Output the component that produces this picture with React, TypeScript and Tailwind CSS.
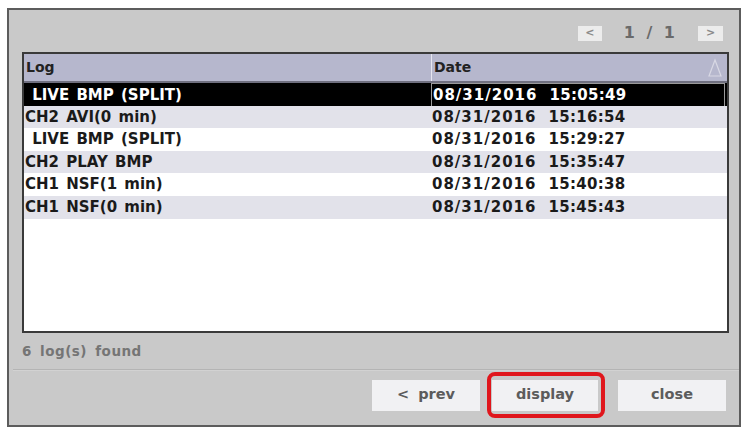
import React from 'react';

const rows = [
  { log: ' LIVE BMP (SPLIT)', date: '08/31/2016 15:05:49' },
  { log: 'CH2 AVI(0 min)', date: '08/31/2016 15:16:54' },
  { log: ' LIVE BMP (SPLIT)', date: '08/31/2016 15:29:27' },
  { log: 'CH2 PLAY BMP', date: '08/31/2016 15:35:47' },
  { log: 'CH1 NSF(1 min)', date: '08/31/2016 15:40:38' },
  { log: 'CH1 NSF(0 min)', date: '08/31/2016 15:45:43' },
];

export default function App() {
  return (
    <div className="w-[746px] h-[428px] bg-white pt-[8px] pl-[7px] font-['DejaVu_Sans',sans-serif] font-bold">
      <div className="w-[734px] h-[419px] bg-[#c9c9c9] border-2 border-[#5c5c5c] flex flex-col">
        {/* pager */}
        <div className="h-[42px] flex items-center justify-end pr-[16px] pt-[4px]">
          <div className="w-[24px] h-[15px] bg-[#ececec] flex items-center justify-center text-[11px] text-[#8a8a8a]">&lt;</div>
          <span className="ml-[22px] mr-[20px] text-[16px] text-[#6a6a6a] tracking-[3px]">1 / 1</span>
          <div className="w-[25px] h-[15px] bg-[#ececec] flex items-center justify-center text-[11px] text-[#8a8a8a]">&gt;</div>
        </div>

        {/* table */}
        <div className="ml-[13px] mr-[10px] h-[281px] bg-white border-2 border-[#3a3a3a] flex flex-col">
          <div className="h-[29px] grid grid-cols-[407px_1fr] bg-[#b6b7cd] border-b-2 border-[#707080] text-[14px] text-[#222]">
            <div className="pl-[2px] flex items-center">Log</div>
            <div className="relative pl-[2px] flex items-center border-l border-[#e6e6f0]">
              Date
              <svg className="absolute right-[4px] top-[4px]" width="16" height="20" viewBox="0 0 16 20">
                <path d="M8 2 L14 18 L2 18 Z" fill="none" stroke="#d8d8e4" strokeWidth="1.2" />
              </svg>
            </div>
          </div>
          {rows.map((r, i) => {
            const sel = i === 0;
            const bg = sel ? 'bg-black text-white' : i % 2 === 1 ? 'bg-[#e2e2ea] text-[#1a1a1a]' : 'bg-white text-[#1a1a1a]';
            return (
              <div key={i} className={`h-[22.6px] grid grid-cols-[407px_1fr] text-[15px] whitespace-pre ${bg}`}>
                <div className="pl-[1px] flex items-center [word-spacing:2px]">{r.log}</div>
                <div className={`pl-[1px] flex items-center ${sel ? 'border border-[#9a9a9a] mr-[2px]' : ''}`}>
                  <span className="tracking-[1px]">{r.date.split(' ')[0]}</span>
                  <span className="ml-[12px] tracking-[0.3px]">{r.date.split(' ')[1]}</span>
                </div>
              </div>
            );
          })}
        </div>

        {/* status */}
        <div className="h-[36px] pl-[13px] flex items-center text-[13.5px] text-[#757575] tracking-[0.5px] [word-spacing:3px] whitespace-pre">6 log(s) found</div>

        <div className="ml-[4px] h-[2px] border-t border-[#b4b4b4] bg-[#d2d2d2]" />

        {/* buttons */}
        <div className="flex-1 flex items-center justify-end pr-[13px] pb-[6px] gap-[12px] text-[14.5px] text-[#5c5c5c]">
          <button className="w-[108px] h-[31px] bg-[#f1f1f3] [word-spacing:4px]">&lt; prev</button>
          <div className="relative">
            <button className="w-[106px] h-[31px] bg-[#f1f1f3]">display</button>
            <div className="absolute -left-[5px] -top-[8px] w-[118px] h-[46px] rounded-[8px] border-[4px] border-[#e0161c]" />
          </div>
          <button className="ml-[8px] w-[108px] h-[31px] bg-[#f1f1f3]">close</button>
        </div>
      </div>
    </div>
  );
}
